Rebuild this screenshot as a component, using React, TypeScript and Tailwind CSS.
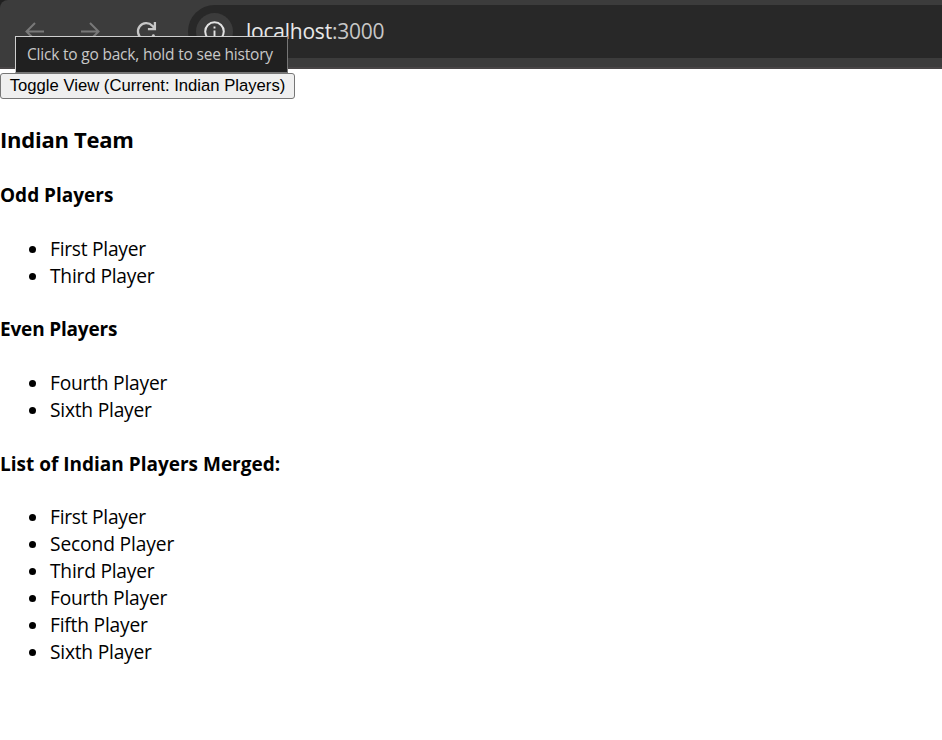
import React from "react";

function List({ items }: { items: [string, string][] }) {
  return (
    <ul className="flex flex-col">
      {items.map(([name, spacing]) => (
        <li key={name} className="flex h-[27px] items-center text-[19.2px] leading-[27px]">
          <span className="ml-[29px] mr-[14px] mt-px size-[7px] rounded-full bg-black" />
          <span className={spacing}>{name}</span>
        </li>
      ))}
    </ul>
  );
}

const first: [string, string] = ["First Player", "tracking-[-0.25px]"];
const second: [string, string] = ["Second Player", "tracking-[-0.13px]"];
const third: [string, string] = ["Third Player", "tracking-[-0.22px]"];
const fourth: [string, string] = ["Fourth Player", "tracking-[-0.22px]"];
const fifth: [string, string] = ["Fifth Player", "tracking-[-0.2px]"];
const sixth: [string, string] = ["Sixth Player", "tracking-[-0.22px]"];

export default function App() {
  return (
    <div className="relative h-[740px] w-[942px] overflow-hidden bg-white font-['Open_Sans','Noto_Sans',sans-serif] text-black">
      <header className="h-[69px] bg-[#202020]">
        <div className="flex h-[69px] rounded-tl-[8px] border-b-2 border-[#484546] bg-[#3c3c3c] pt-[5px]">
          <svg width="188" height="53" viewBox="0 5 188 53" fill="none" className="shrink-0">
            <path d="M44 31.500H27M35 23l-8.500 8.500L35 40" stroke="#797979" strokeWidth="2" />
            <path d="M81 31.500h17.500M90 23l8.500 8.500L90 40" stroke="#797979" strokeWidth="2" />
            <path d="M154 34.500a8.300 8.300 0 1 1-1.700-8.800l3 3.300M154.900 22v7.200h-7" stroke="#c7c7c7" strokeWidth="2.300" />
          </svg>
          <div className="flex h-[53px] flex-1 items-center rounded-l-full bg-[#282828] pl-2">
            <div className="flex size-[37px] items-center justify-center rounded-full bg-[#3c3c3c]">
              <svg width="21" height="21" viewBox="0 0 21 21" fill="none">
                <circle cx="10.500" cy="10.500" r="9.300" stroke="#e3e3e3" strokeWidth="2" />
                <path d="M10.500 9.500v6M10.500 5.500v2" stroke="#e3e3e3" strokeWidth="1.900" />
              </svg>
            </div>
            <span className="-mt-[2px] ml-[13px] text-[21px] leading-[28px] tracking-[-0.23px] text-[#c7c7c7]">
              <span className="text-[#e8e8e8]">localhost</span>:3000
            </span>
          </div>
        </div>
      </header>
      <main>
        <button className="mt-[4px] flex h-[26px] w-[295px] items-center justify-center rounded-[3px] border border-[#767676] bg-[#efefef] font-['Liberation_Sans',Arial,sans-serif] text-[16.67px] leading-[24px]">
          <span className="-mt-px">Toggle View (Current: Indian Players)</span>
        </button>
        <h3 className="mt-[25px] h-[30px] text-[22px] font-bold leading-[30px] tracking-[-0.25px]">Indian Team</h3>
        <h4 className="mb-[26px] mt-[28px] h-[27px] text-[19px] font-bold leading-[27px]">Odd Players</h4>
        <List items={[first, third]} />
        <h4 className="mb-[26px] mt-[27px] h-[27px] text-[19px] font-bold leading-[27px] tracking-[-0.18px]">Even Players</h4>
        <List items={[fourth, sixth]} />
        <h4 className="mb-[25px] mt-[28px] h-[27px] text-[19px] font-bold leading-[27px]">List of Indian Players Merged:</h4>
        <List items={[first, second, third, fourth, fifth, sixth]} />
      </main>
      <div className="absolute left-[15px] top-[36px] flex h-[37px] w-[273px] items-center border border-[#cfcfcf] border-b-[#767676] border-r-[#767676] bg-[#202020] pl-[11px] text-[15.500px] tracking-[-0.2px] text-[#c8c8c8]">
        <span className="whitespace-nowrap">Click to go back, hold to see history</span>
      </div>
    </div>
  );
}
